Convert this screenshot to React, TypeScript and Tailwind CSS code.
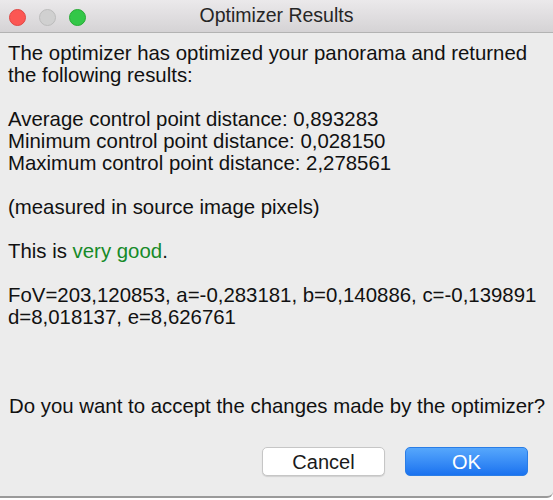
export default function App() {
  const font = { fontFamily: '"Liberation Sans", Arial, sans-serif' }
  return (
    <div className="w-[553px] h-[500px] bg-white" style={font}>
      <div className="h-[498px] bg-[#ececec] border-b-2 border-[#9a9a9a] rounded-br-[6px] flex flex-col">
        <div className="relative h-[33px] shrink-0 bg-gradient-to-b from-[#ebe9eb] to-[#d5d3d5] border-b border-[#b3b3b3] flex items-center justify-center">
          <div className="absolute left-[9px] top-[9px] flex gap-[13px]">
            <span className="w-[17px] h-[17px] rounded-full bg-[#fc5753] border border-[#df4744]" />
            <span className="w-[17px] h-[17px] rounded-full bg-[#d0d0d0] border border-[#bcbcbc]" />
            <span className="w-[17px] h-[17px] rounded-full bg-[#33c748] border border-[#27aa35]" />
          </div>
          <span className="text-[19.5px] text-[#262626] leading-none">Optimizer Results</span>
        </div>

        <div className="px-2 pt-[9px] text-[20.4px] leading-[22px] text-[#111]">
          <p>
            The optimizer has optimized your panorama and returned
            <br />
            the following results:
          </p>
          <p className="mt-[22px]">
            Average control point distance: 0,893283
            <br />
            Minimum control point distance: 0,028150
            <br />
            Maximum control point distance: 2,278561
          </p>
          <p className="mt-[22px]">(measured in source image pixels)</p>
          <p className="mt-[22px]">
            This is <span className="text-[#168a28]">very good</span>.
          </p>
          <p className="mt-[22px]">
            FoV=203,120853, a=-0,283181, b=0,140886, c=-0,139891
            <br />
            d=8,018137, e=8,626761
          </p>
          <p className="mt-[67px] pl-px whitespace-nowrap">Do you want to accept the changes made by the optimizer?</p>
        </div>

        <div className="flex justify-end gap-[20px] pr-[25px] mt-[30px]">
          <button className="w-[123px] h-[29px] rounded-[5px] bg-white border border-[#c6c6c6] shadow-[0_1px_1px_rgba(0,0,0,0.12)] text-[20px] text-[#1a1a1a] leading-none">
            Cancel
          </button>
          <button className="w-[123px] h-[29px] rounded-[5px] bg-gradient-to-b from-[#56a7fc] to-[#1a72ef] border border-[#2a7de6] text-[20px] text-white leading-none">
            OK
          </button>
        </div>
      </div>
    </div>
  )
}
